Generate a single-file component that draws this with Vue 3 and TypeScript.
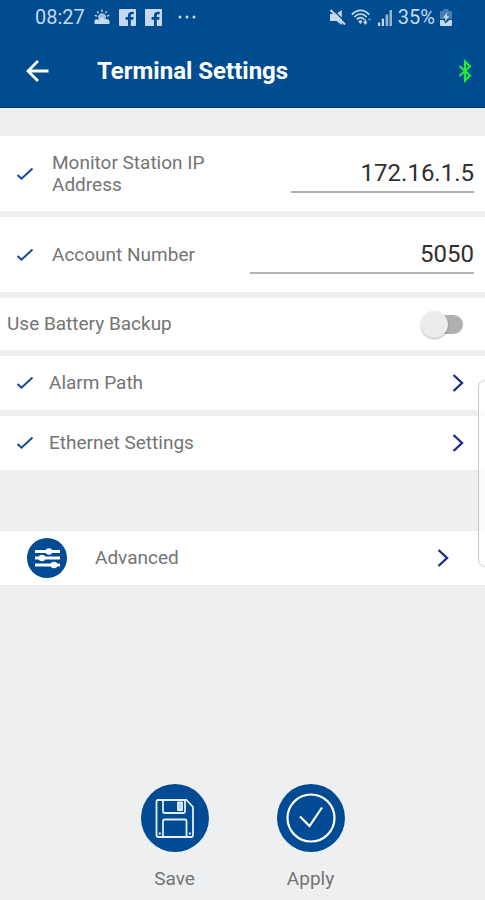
<script setup lang="ts">
import { ref } from 'vue'

const stationIp = ref('172.16.1.5')
const accountNumber = ref('5050')
const batteryBackup = ref(false)
const links = ['Alarm Path', 'Ethernet Settings']
</script>

<template>
  <div class="screen">
    <header class="top">
      <div class="status">
        <div class="status-group">
          <span class="clock">08:27</span>
          <svg class="weather" width="16" height="16" viewBox="0 0 16 16" aria-hidden="true">
            <path d="M8 .5v2.500M3.200 2.400l1.400 1.700M12.800 2.400l-1.400 1.700M.8 6.300l2.200.8M15.200 6.300l-2.200.8" stroke="currentColor" stroke-width="1.300" />
            <path d="M3.800 8.500a4.200 4.200 0 0 1 8.400-.2l-1 2H5z" fill="currentColor" opacity=".8" />
            <path d="M.5 15v-3.300c1.200-1.700 2.800-1.700 3.900-.9C6 7.600 9.700 7.600 11 10.200c2.300-.6 4.500.4 4.500 2.300V15z" fill="currentColor" />
          </svg>
          <svg v-for="n in 2" :key="n" class="social" width="17" height="17" viewBox="0 0 17 17" aria-hidden="true">
            <path fill="currentColor" fill-rule="evenodd" d="M1 0h15Q17 0 17 1v15Q17 17 16 17h-4.200v-6.300h2.400l.4-2.600h-2.800V6.500c0-.8.400-1.300 1.400-1.300h1.500V2.800c-3.500-.6-5.700.5-5.700 3.500v1.800H6.600v2.600H9V17H1Q0 17 0 16V1Q0 0 1 0z" />
          </svg>
          <svg class="dots" width="20" height="4" viewBox="0 0 20 4" aria-hidden="true">
            <g fill="currentColor"><circle cx="3" cy="2" r="1.500" /><circle cx="10" cy="2" r="1.500" /><circle cx="17" cy="2" r="1.500" /></g>
          </svg>
        </div>
        <div class="status-group right">
          <svg width="17" height="17" viewBox="0 0 17 17" aria-hidden="true">
            <path d="M1 5h3.500l1.800-.8 6.500 6.300V16L7.500 12H1zM8.300 4.300L12.800 1v7.500z" fill="currentColor" />
            <path d="M1.500 1l14.500 14.500" stroke="currentColor" stroke-width="2" />
          </svg>
          <svg width="21" height="18" viewBox="0 0 22 18" aria-hidden="true">
            <g fill="none" stroke="currentColor" stroke-width="1.800">
              <path d="M1 6.500C6 .6 14 .6 19 6.500" />
              <path d="M3.500 9C7.500 4.800 12.500 4.800 16.500 9" />
              <path d="M6 11.600c2.500-2.600 5.500-2.600 8 0" />
            </g>
            <path d="M7.500 13.500Q10 11.500 12 13.200L10 16.500z" fill="currentColor" />
            <path d="M12.500 14h5L15 17.500z" fill="currentColor" />
            <path d="M17.500 12.500h4L19.500 9.500z" fill="currentColor" opacity=".45" />
            <path d="M15 11.500V15" stroke="currentColor" stroke-width="1.600" />
          </svg>
          <svg width="16" height="17" viewBox="0 0 16 17" aria-hidden="true">
            <path fill="currentColor" d="M1 13.500h2.200V17H1zM4.800 9.800H7V17H4.800z" />
            <path fill="currentColor" opacity=".75" d="M8.600 5.500h2.600V17H8.600zM12.500 1H15v16h-2.500z" />
          </svg>
          <span class="percent">35%</span>
          <svg width="12" height="17" viewBox="0 0 12 17" aria-hidden="true">
            <path d="M3.500 0h5v2H11q1 0 1 1v7H0V3q0-1 1-1h2.500z" fill="currentColor" opacity=".35" />
            <path d="M0 11h3.500l2 3.500 3.500-3.500h3v5q0 1-1 1H1q-1 0-1-1z" fill="currentColor" />
            <path d="M7.500 3L3 8.700h2.500L4.800 13l4.400-5.700H6.600z" fill="currentColor" />
          </svg>
        </div>
      </div>
      <div class="bar">
        <button class="back" type="button" aria-label="Back">
          <svg width="24" height="24" viewBox="0 0 24 24" aria-hidden="true">
            <path d="M23.500 12H3.500M13 2L3 12l10 10" fill="none" stroke="currentColor" stroke-width="2.800" />
          </svg>
        </button>
        <h1>Terminal Settings</h1>
        <svg class="bluetooth" width="14" height="24" viewBox="0 0 14 24" aria-hidden="true">
          <path d="M1.500 7l10.500 9.500L7 21.500v-19L12 7.300 1.500 17" fill="none" stroke="currentColor" stroke-width="2.200" />
        </svg>
      </div>
    </header>

    <main class="list">
      <div class="row field-row">
        <svg class="tick" width="18" height="14" viewBox="0 0 18 14" aria-hidden="true"><path d="M1.500 8l4 3.700L16.500 1.500" /></svg>
        <label class="name" for="station-ip">Monitor Station IP Address</label>
        <input id="station-ip" v-model="stationIp" class="entry ip" type="text" />
      </div>
      <div class="row field-row">
        <svg class="tick" width="18" height="14" viewBox="0 0 18 14" aria-hidden="true"><path d="M1.500 8l4 3.700L16.500 1.500" /></svg>
        <label class="name" for="account-number">Account Number</label>
        <input id="account-number" v-model="accountNumber" class="entry account" type="text" />
      </div>
      <div class="row switch-row">
        <label class="name" for="battery">Use Battery Backup</label>
        <input id="battery" v-model="batteryBackup" class="switch" type="checkbox" role="switch" />
      </div>
      <a v-for="link in links" :key="link" class="row link-row" href="#">
        <svg class="tick" width="18" height="14" viewBox="0 0 18 14" aria-hidden="true"><path d="M1.500 8l4 3.700L16.500 1.500" /></svg>
        <span class="name">{{ link }}</span>
        <svg class="chevron" width="12" height="20" viewBox="0 0 12 20" aria-hidden="true"><path d="M1.500 2l8.500 8-8.500 8" /></svg>
      </a>
      <a class="row advanced" href="#">
        <svg class="sliders" width="40" height="40" viewBox="0 0 40 40" aria-hidden="true">
          <circle cx="20" cy="20" r="20" fill="#004b94" />
          <path d="M8 13.500h25M8 20h25M8 27h25" stroke="#fff" stroke-width="3" />
          <g fill="#fff"><circle cx="22" cy="13.500" r="3.300" /><circle cx="15" cy="20" r="3.300" /><circle cx="27" cy="27" r="3.300" /></g>
        </svg>
        <span class="name">Advanced</span>
        <svg class="chevron" width="12" height="20" viewBox="0 0 12 20" aria-hidden="true"><path d="M1.500 2l8.500 8-8.500 8" /></svg>
      </a>
    </main>

    <footer class="actions">
      <button class="action" type="button">
        <svg width="68" height="68" viewBox="0 0 68 68" aria-hidden="true">
          <circle cx="34" cy="34" r="34" fill="#004b94" />
          <g fill="none" stroke="#e6efff" stroke-width="1.800" stroke-linejoin="round">
            <path d="M17 16h28.500l6.500 7v28.500q0 1.500-1.500 1.500h-33q-2 0-2-2V18q0-2 1.500-2z" />
            <path d="M22 16v11.500q0 1.500 1.500 1.500h19q1.500 0 1.500-1.500V16" />
            <path d="M22 53V37q0-1.500 1.500-1.500h20.500q1.500 0 1.500 1.500v16" />
            <path d="M37 18.500h4v7.500h-4z" fill="#bccde6" />
          </g>
          <path d="M17.800 48.500h2v2h-2zM47.800 48.500h2v2h-2z" fill="#e6efff" />
        </svg>
        <span>Save</span>
      </button>
      <button class="action" type="button">
        <svg width="68" height="68" viewBox="0 0 68 68" aria-hidden="true">
          <circle cx="34" cy="34" r="34" fill="#004b94" />
          <g fill="none" stroke="#fff" stroke-width="2.200">
            <circle cx="34" cy="34" r="23.500" />
            <path d="M23 32.500l9.500 9.500L45 23.500" />
          </g>
        </svg>
        <span>Apply</span>
      </button>
    </footer>
    <div class="edge-handle"></div>
  </div>
</template>

<style>
body {
  background: #eeeff1;
}
</style>

<style scoped>
.screen {
  position: relative;
  display: flex;
  flex-direction: column;
  min-height: 100vh;
  overflow: hidden;
  background: #eeeff1;
  color: #747474;
  font-family: Roboto, 'Liberation Sans', sans-serif;
  font-size: 19px;
  line-height: 22px;
}

.top {
  background: #004c90;
  color: #fff;
}

.status {
  display: flex;
  justify-content: space-between;
  height: 34px;
  padding: 0 33px 0 35px;
  color: #c6d9f0;
}

.status-group {
  display: flex;
  align-items: center;
  gap: 9px;
}

.right {
  gap: 5px;
}

.clock,
.percent {
  font-size: 20px;
}

.dots {
  margin-left: 6px;
}

.bar {
  display: flex;
  align-items: center;
  height: 74px;
  padding: 0 13px 0 25px;
  box-sizing: border-box;
  border-bottom: 1px solid #003380;
}

.back {
  display: flex;
  width: 72px;
  padding: 0;
  border: 0;
  background: none;
  color: inherit;
}

h1 {
  flex: 1;
  margin: 0;
  font-size: 24px;
  line-height: 28px;
  font-weight: 700;
}

.bluetooth {
  color: #21ed35;
}

.list {
  display: flex;
  flex-direction: column;
  gap: 6px;
  padding-top: 28px;
}

.row {
  display: flex;
  align-items: center;
  box-sizing: border-box;
  background: #fff;
  color: inherit;
  text-decoration: none;
}

.name {
  flex: 1;
}

.tick {
  flex: none;
  fill: none;
  stroke: #12479b;
  stroke-width: 2;
}

.chevron {
  fill: none;
  stroke: #202b8c;
  stroke-width: 2.4;
}

.field-row {
  gap: 18px;
  min-height: 75px;
  padding: 0 11px 0 16px;
}

.field-row .name {
  max-width: 160px;
}

.entry {
  box-sizing: border-box;
  min-width: 0;
  height: 38px;
  margin-left: auto;
  padding: 0;
  border: 0;
  border-bottom: 2px solid #b2b2b2;
  background: none;
  color: #303030;
  font: inherit;
  font-size: 24px;
  text-align: right;
  outline: none;
}

.ip {
  width: 40%;
}

.account {
  width: 49%;
}

.switch-row {
  min-height: 52px;
  padding: 0 22px 0 7px;
}

.switch {
  position: relative;
  appearance: none;
  width: 38px;
  height: 19px;
  margin: 0;
  border-radius: 10px;
  background: #b0b0b0;
}

.switch::before {
  content: '';
  position: absolute;
  top: -4px;
  left: -4px;
  width: 27px;
  height: 27px;
  border-radius: 50%;
  background: #ececec;
  box-shadow: 0 1px 2px rgba(0, 0, 0, 0.3);
}

.switch:checked::before {
  left: 15px;
}

.link-row {
  gap: 15px;
  min-height: 54px;
  padding: 0 21px 0 16px;
}

.advanced {
  gap: 28px;
  min-height: 54px;
  margin-top: 55px;
  padding: 0 36px 0 27px;
}

.actions {
  display: flex;
  justify-content: center;
  gap: 68px;
  margin-top: auto;
  padding-bottom: 10px;
}

.action {
  display: flex;
  flex-direction: column;
  align-items: center;
  gap: 16px;
  padding: 0;
  border: 0;
  background: none;
  color: inherit;
  font: inherit;
}

.edge-handle {
  position: absolute;
  top: 380px;
  right: -10px;
  width: 15px;
  height: 185px;
  border: 1px solid #c8c9ca;
  border-radius: 7px;
  background: rgba(255, 255, 255, 0.75);
}
</style>
